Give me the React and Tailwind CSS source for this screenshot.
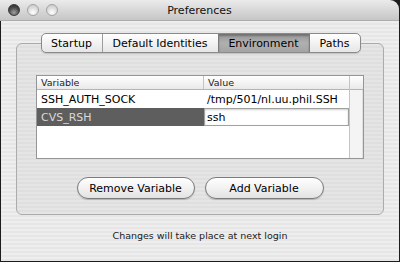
export default function App() {
  return (
    <div className="w-[400px] h-[262px] bg-[#1c1c1c] flex flex-col font-['DejaVu_Sans',sans-serif] text-black">
      <div className="flex-1 flex flex-col mr-[1px] mb-[1px] rounded-tr-[9px] overflow-hidden">
        {/* Title bar */}
        <div className="h-[21px] shrink-0 flex items-center bg-gradient-to-b from-[#ebebeb] to-[#c6c6c6] border-b border-[#adadad]">
          <div className="w-[70px] flex items-center gap-[7px] pl-[8px]">
            <div className="w-[12px] h-[12px] rounded-full border border-[#3a3a3a] bg-[radial-gradient(circle_at_50%_75%,#a0a0a0,#4c4c4c_55%,#262626)]" />
            <div className="w-[12px] h-[12px] rounded-full border border-[#a2a2a2] bg-[radial-gradient(circle_at_50%_75%,#ffffff,#dcdcdc_55%,#c4c4c4)]" />
            <div className="w-[12px] h-[12px] rounded-full border border-[#a2a2a2] bg-[radial-gradient(circle_at_50%_75%,#ffffff,#dcdcdc_55%,#c4c4c4)]" />
          </div>
          <div className="flex-1 text-center text-[11px] leading-[13px] text-[#111]">Preferences</div>
          <div className="w-[70px]" />
        </div>

        {/* Body */}
        <div className="flex-1 ml-[1px] flex flex-col items-center bg-[repeating-linear-gradient(180deg,#eeeeee_0px,#eeeeee_2px,#e6e6e6_2px,#e6e6e6_4px)]">
          {/* Tabs */}
          <div className="relative z-10 mt-[12px] ml-[1px] flex h-[20px] rounded-[5px] border border-[#8a8a8a] overflow-hidden bg-gradient-to-b from-[#ffffff] to-[#e6e6e6] text-[11px] leading-[13px] shadow-[0_1px_1px_rgba(0,0,0,0.15)]">
            <div className="w-[60px] flex items-center justify-center">Startup</div>
            <div className="w-[116px] flex items-center justify-center border-l border-[#9c9c9c]">Default Identities</div>
            <div className="w-[91px] flex items-center justify-center border-l border-[#7c7c7c] bg-gradient-to-b from-[#969696] via-[#b0b0b0] to-[#a4a4a4] shadow-[inset_0_2px_2px_rgba(0,0,0,0.25)]">Environment</div>
            <div className="w-[51px] flex items-center justify-center border-l border-[#7c7c7c]">Paths</div>
          </div>

          {/* Group box */}
          <div className="-mt-[10px] w-[368px] h-[172px] rounded-[6px] border border-[#ababab] bg-[repeating-linear-gradient(180deg,#e5e5e5_0px,#e5e5e5_2px,#dfdfdf_2px,#dfdfdf_4px)] flex flex-col items-center pt-[31px]">
            {/* Table */}
            <div className="w-[328px] h-[84px] border border-[#959595] bg-white flex text-[11px] leading-[13px]">
              <div className="flex-1 flex flex-col">
                <div className="flex h-[14px] shrink-0 border-b border-[#b4b4b4] bg-gradient-to-b from-white to-[#e9e9e9] text-[9.5px] leading-[11px] text-[#222]">
                  <div className="w-[166px] pl-[4px] flex items-center">Variable</div>
                  <div className="flex-1 border-l border-[#c4c4c4] pl-[4px] flex items-center">Value</div>
                </div>
                <div className="flex h-[18px] shrink-0 items-center">
                  <div className="w-[166px] pl-[4px]">SSH_AUTH_SOCK</div>
                  <div className="flex-1 pl-[4px] whitespace-nowrap overflow-hidden">/tmp/501/nl.uu.phil.SSH</div>
                </div>
                <div className="flex h-[18px] shrink-0 bg-[#5e5e5e]">
                  <div className="w-[167px] pl-[4px] flex items-center text-[#dadada]">CVS_RSH</div>
                  <div className="flex-1 h-full bg-white border border-[#a0a0a0] shadow-[inset_0_1px_2px_rgba(0,0,0,0.2)] flex items-center pl-[2px]">ssh</div>
                </div>
              </div>
              <div className="w-[14px] border-l border-[#c4c4c4] flex flex-col">
                <div className="h-[14px] shrink-0 border-b border-[#b4b4b4] bg-gradient-to-b from-white to-[#e9e9e9]" />
                <div className="flex-1 bg-[#f4f4f4] border-r border-[#e0e0e0]" />
              </div>
            </div>

            {/* Buttons */}
            <div className="mt-[18px] flex gap-[10px] text-[11px] leading-[13px]">
              <div className="w-[118px] h-[22px] rounded-full border border-[#7a7a7a] bg-gradient-to-b from-[#ffffff] via-[#f2f2f2] to-[#e2e2e2] shadow-[0_1px_1px_rgba(0,0,0,0.2)] flex items-center justify-center">Remove Variable</div>
              <div className="w-[119px] h-[22px] rounded-full border border-[#7a7a7a] bg-gradient-to-b from-[#ffffff] via-[#f2f2f2] to-[#e2e2e2] shadow-[0_1px_1px_rgba(0,0,0,0.2)] flex items-center justify-center">Add Variable</div>
            </div>
          </div>

          <div className="mt-[15px] text-[9.5px] leading-[12px] text-[#1a1a1a]">Changes will take place at next login</div>
        </div>
      </div>
    </div>
  );
}
